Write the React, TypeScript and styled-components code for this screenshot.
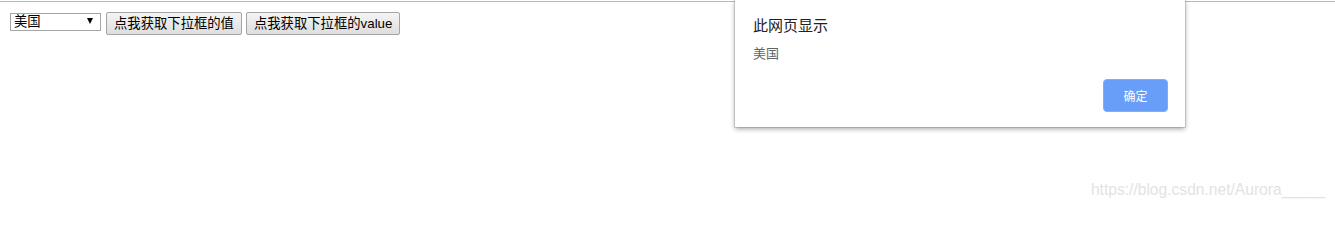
import React from "react";
import styled, { createGlobalStyle } from "styled-components";

const GlobalStyle = createGlobalStyle`
    html, body {
        margin: 0;
        padding: 0;
        background: #fff;
    }
    body {
        font-family: "Liberation Sans", "Noto Sans CJK SC", sans-serif;
    }
`;

const Page = styled.div`
    position: relative;
    width: 1335px;
    height: 209px;
    overflow: hidden;
`;

const TopRule = styled.div`
    height: 1px;
    margin-top: 1px;
    background-color: #b9b9b9;
`;

const Controls = styled.div`
    display: flex;
    align-items: flex-start;
    padding: 10px 0 0 10px;
`;

const SelectWrap = styled.div`
    position: relative;
    margin-top: 1px;
    margin-right: 5px;
`;

const Select = styled.select`
    appearance: none;
    display: block;
    width: 91px;
    height: 18px;
    margin: 0;
    padding: 0 0 0 3px;
    border: 1px solid #a6a6a6;
    border-radius: 0;
    background: #fff;
    color: #000;
    font-family: "Liberation Sans", "Noto Sans CJK SC", sans-serif;
    font-size: 13.33px;
    line-height: 16px;
    outline: none;
`;

const Arrow = styled.span`
    position: absolute;
    top: 5px;
    right: 8px;
    width: 0;
    height: 0;
    border-left: 3.5px solid transparent;
    border-right: 3.5px solid transparent;
    border-top: 6px solid #000;
    pointer-events: none;
`;

const Button = styled.button<{ last?: boolean }>`
    height: 23px;
    margin: 0 ${props => (props.last ? "0" : "4px")} 0 0;
    padding: 0 7px;
    border: 1px solid #a4a4a4;
    border-radius: 2px;
    background: linear-gradient(#f4f4f4, #dedede);
    color: #000;
    font-family: "Liberation Sans", "Noto Sans CJK SC", sans-serif;
    font-size: 13.33px;
    line-height: 21px;
    white-space: nowrap;
    cursor: pointer;
`;

const Dialog = styled.div`
    position: absolute;
    top: 0;
    left: 735px;
    width: 450px;
    height: 127px;
    box-sizing: border-box;
    padding: 16px 17px 15px 18px;
    display: flex;
    flex-direction: column;
    background: #fff;
    box-shadow: 0 0 0 1px rgba(0, 0, 0, 0.12), 0 2px 5px rgba(0, 0, 0, 0.35);
    font-family: "Noto Sans CJK SC", "Liberation Sans", sans-serif;
`;

const Title = styled.div`
    font-size: 15px;
    line-height: 18px;
    color: #202124;
`;

const Message = styled.div`
    margin-top: 11px;
    font-size: 13px;
    line-height: 16px;
    color: #5f6368;
`;

const Footer = styled.div`
    margin-top: auto;
    display: flex;
    justify-content: flex-end;
`;

const OkButton = styled.button`
    width: 65px;
    height: 33px;
    padding: 0;
    border: 1px solid #80adf8;
    border-radius: 4px;
    background-color: #689ef8;
    color: #fff;
    font-family: "Noto Sans CJK SC", sans-serif;
    font-size: 12px;
    cursor: pointer;
`;

const Watermark = styled.div`
    position: absolute;
    right: 10px;
    bottom: 10px;
    font-family: "Liberation Sans", sans-serif;
    font-size: 15.6px;
    color: #e3e3e3;
    white-space: nowrap;
`;

const App = () => {
    return (
        <Page>
            <GlobalStyle />
            <TopRule />
            <Controls>
                <SelectWrap>
                    <Select defaultValue="usa">
                        <option value="usa">美国</option>
                        <option value="china">中国</option>
                        <option value="japan">日本</option>
                    </Select>
                    <Arrow />
                </SelectWrap>
                <Button>点我获取下拉框的值</Button>
                <Button last>点我获取下拉框的value</Button>
            </Controls>
            <Dialog>
                <Title>此网页显示</Title>
                <Message>美国</Message>
                <Footer>
                    <OkButton>确定</OkButton>
                </Footer>
            </Dialog>
            <Watermark>https://blog.csdn.net/Aurora_____</Watermark>
        </Page>
    );
};

export default App;
